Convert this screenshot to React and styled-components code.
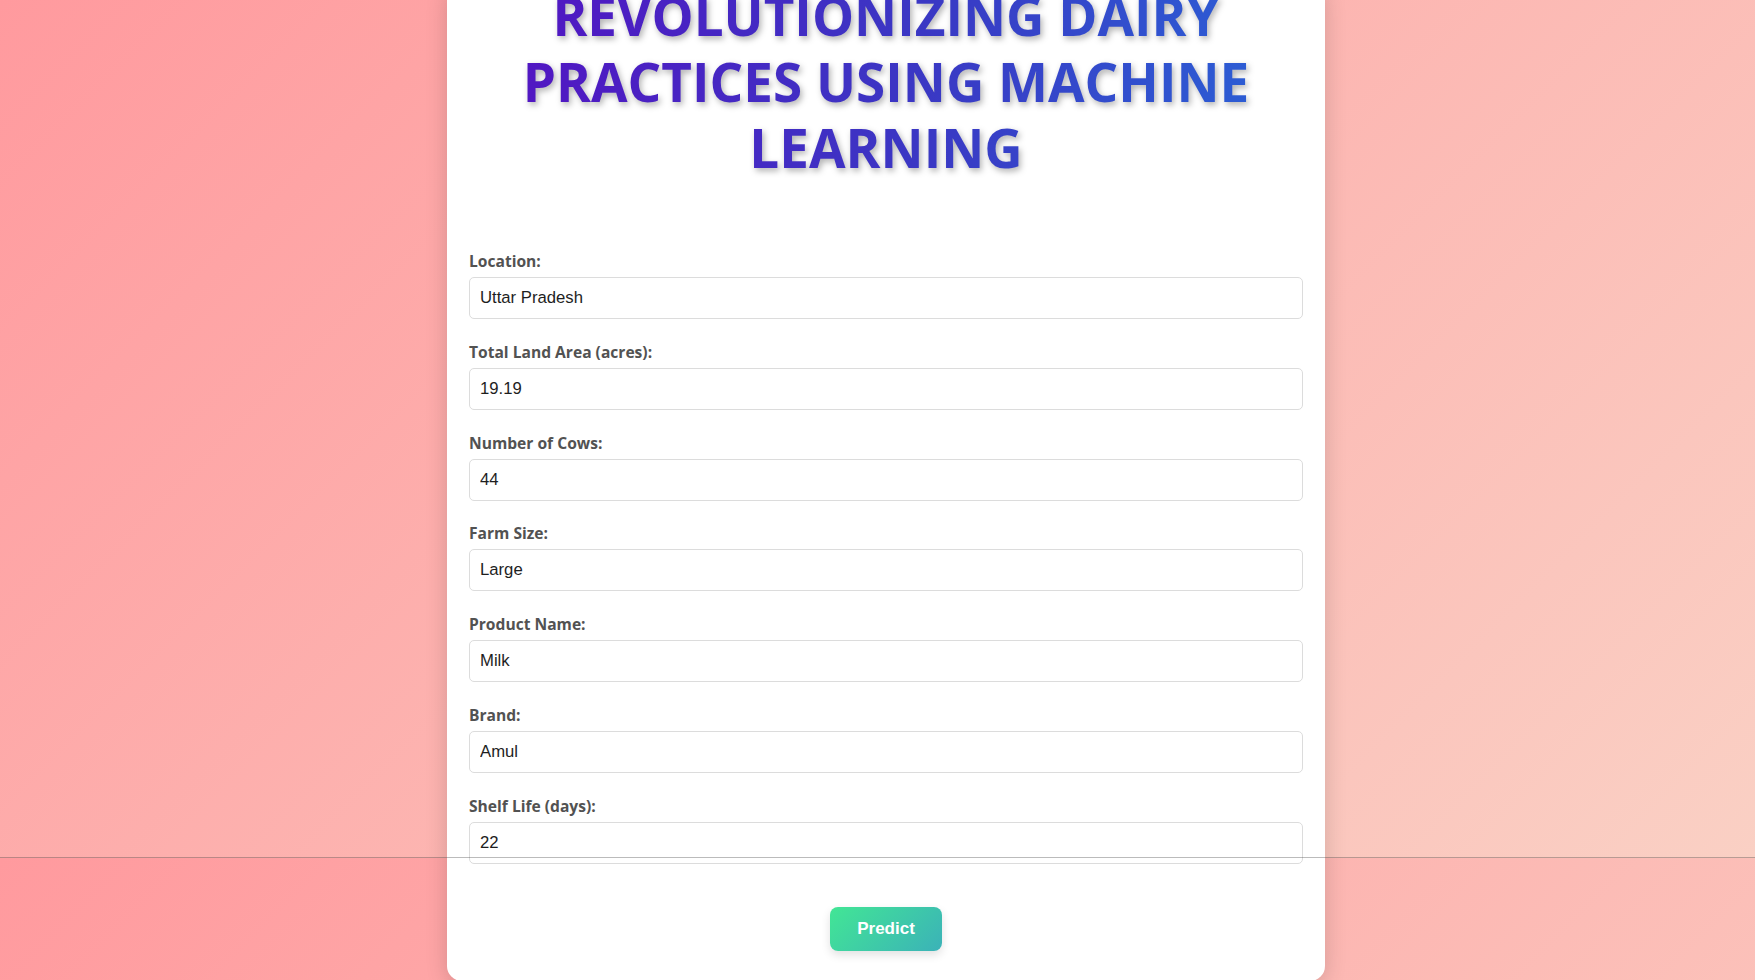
import styled, { createGlobalStyle } from "styled-components";

const GlobalStyle = createGlobalStyle`
  html, body {
    margin: 0;
    padding: 0;
  }
  body {
    height: 980px;
    overflow: hidden;
    background-image: linear-gradient(135deg, #ff9a9e 0%, #fad0c4 100%);
    background-size: 100% 858px;
    background-repeat: repeat-y;
    font-family: "Open Sans", "Liberation Sans", sans-serif;
  }
`;

const Page = styled.main`
  display: flex;
  justify-content: center;
  padding-left: 17px;
`;

const Card = styled.section`
  width: 878px;
  box-sizing: border-box;
  margin-top: -17px;
  padding: 0 22px 30px;
  background: #ffffff;
  border-radius: 15px;
  box-shadow: 0 4px 22px rgba(0, 0, 0, 0.16);
`;

const Title = styled.h1`
  margin: 0 0 69px;
  font-size: 53px;
  line-height: 66px;
  font-weight: 700;
  text-align: center;
  text-transform: uppercase;
  background: linear-gradient(90deg, #5412c2 0%, #3a38c4 55%, #2a62d6 100%);
  -webkit-background-clip: text;
  background-clip: text;
  color: transparent;
  filter: drop-shadow(2px 3px 3px rgba(0, 0, 0, 0.3));
`;

const Form = styled.form`
  display: flex;
  flex-direction: column;
  gap: 21.8px;
`;

const Field = styled.div`
  display: flex;
  flex-direction: column;
`;

const Label = styled.label`
  font-size: 15.6px;
  line-height: 22px;
  font-weight: 700;
  color: #525252;
  margin-bottom: 5px;
`;

const Input = styled.input`
  height: 42px;
  box-sizing: border-box;
  padding: 0 10px;
  border: 1px solid #dcdcdc;
  border-radius: 5px;
  font-family: "Liberation Sans", Arial, sans-serif;
  font-size: 16.7px;
  color: #1e1e1e;
  background: #fff;
  outline: none;
`;

const Actions = styled.div`
  display: flex;
  justify-content: center;
  margin-top: 43px;
`;

const PredictButton = styled.button`
  height: 44px;
  padding: 0 27px;
  border: none;
  border-radius: 8px;
  background: linear-gradient(135deg, #42e695 0%, #3bb2b8 100%);
  color: #fff;
  font-family: "Liberation Sans", Arial, sans-serif;
  font-size: 17px;
  font-weight: 700;
  box-shadow: 0 4px 10px rgba(0, 0, 0, 0.12);
  cursor: pointer;
`;

const SeamLine = styled.div`
  position: fixed;
  left: 0;
  right: 0;
  top: 857px;
  height: 1px;
  background: rgba(60, 60, 60, 0.35);
  pointer-events: none;
`;

const fields = [
  { id: "location", label: "Location:", value: "Uttar Pradesh" },
  { id: "land", label: "Total Land Area (acres):", value: "19.19" },
  { id: "cows", label: "Number of Cows:", value: "44" },
  { id: "size", label: "Farm Size:", value: "Large" },
  { id: "product", label: "Product Name:", value: "Milk" },
  { id: "brand", label: "Brand:", value: "Amul" },
  { id: "shelf", label: "Shelf Life (days):", value: "22" },
];

const App = () => {
  return (
    <>
      <GlobalStyle />
      <Page>
        <Card>
          <Title>
            Revolutionizing Dairy
            <br />
            Practices Using Machine
            <br />
            Learning
          </Title>
          <Form onSubmit={(e) => e.preventDefault()}>
            {fields.map((f) => (
              <Field key={f.id}>
                <Label htmlFor={f.id}>{f.label}</Label>
                <Input id={f.id} type="text" defaultValue={f.value} />
              </Field>
            ))}
          </Form>
          <Actions>
            <PredictButton type="button">Predict</PredictButton>
          </Actions>
        </Card>
      </Page>
      <SeamLine />
    </>
  );
};

export default App;
